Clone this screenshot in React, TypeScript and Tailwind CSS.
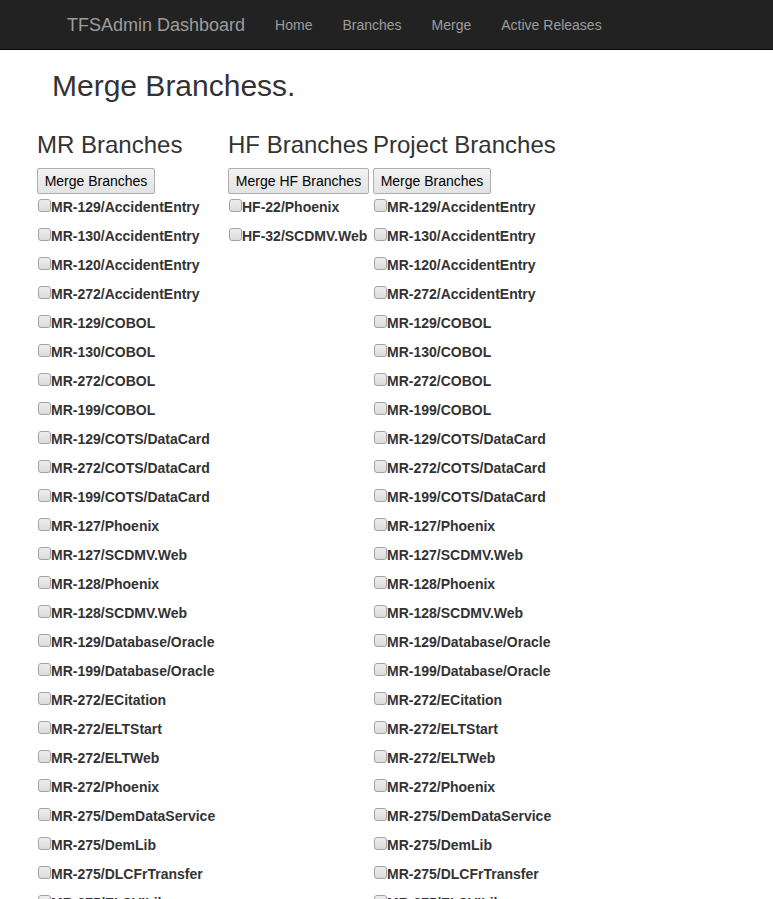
const mrBranches = [
  'MR-129/AccidentEntry',
  'MR-130/AccidentEntry',
  'MR-120/AccidentEntry',
  'MR-272/AccidentEntry',
  'MR-129/COBOL',
  'MR-130/COBOL',
  'MR-272/COBOL',
  'MR-199/COBOL',
  'MR-129/COTS/DataCard',
  'MR-272/COTS/DataCard',
  'MR-199/COTS/DataCard',
  'MR-127/Phoenix',
  'MR-127/SCDMV.Web',
  'MR-128/Phoenix',
  'MR-128/SCDMV.Web',
  'MR-129/Database/Oracle',
  'MR-199/Database/Oracle',
  'MR-272/ECitation',
  'MR-272/ELTStart',
  'MR-272/ELTWeb',
  'MR-272/Phoenix',
  'MR-275/DemDataService',
  'MR-275/DemLib',
  'MR-275/DLCFrTransfer',
  'MR-275/ELSVILib',
];

const hfBranches = ['HF-22/Phoenix', 'HF-32/SCDMV.Web'];

const navLinks = ['Home', 'Branches', 'Merge', 'Active Releases'];

function BranchRow({ name }: { name: string }) {
  return (
    <div className="flex h-[29px] items-start whitespace-nowrap">
      <input
        type="checkbox"
        className="mt-[2px] ml-[1px] h-[13px] w-[13px] shrink-0 appearance-none rounded-[3px] border border-[#a3a3a3] bg-gradient-to-b from-[#ededed] to-[#dcdcdc]"
      />
      <label className="text-[14px] leading-[20px] font-bold text-[#333]">{name}</label>
    </div>
  );
}

function BranchColumn({
  title,
  button,
  buttonWidth,
  width,
  items,
}: {
  title: string;
  button: string;
  buttonWidth: string;
  width: string;
  items: string[];
}) {
  return (
    <div className={`${width} shrink-0`}>
      <h3 className="mb-[10px] text-[24px] leading-[26.4px] font-normal whitespace-nowrap text-[#333]">{title}</h3>
      <button
        className={`${buttonWidth} mb-[3px] h-[26px] rounded-[2px] border border-[#adadad] bg-gradient-to-b from-[#f2f2f2] to-[#e3e3e3] text-center text-[14px] leading-[20px] whitespace-nowrap text-black`}
      >
        {button}
      </button>
      {items.map((b, i) => (
        <BranchRow key={i} name={b} />
      ))}
    </div>
  );
}

export default function App() {
  return (
    <div className="h-[899px] overflow-hidden bg-white font-['Liberation_Sans',Arial,sans-serif] text-[#333]">
      <nav className="flex h-[50px] items-center border-b border-[#080808] bg-[#222]">
        <span className="ml-[67px] text-[18px] leading-[20px] text-[#9d9d9d]">TFSAdmin Dashboard</span>
        <ul className="ml-[30px] flex gap-[30px] text-[14px] leading-[20px] text-[#9d9d9d]">
          {navLinks.map((l) => (
            <li key={l}>{l}</li>
          ))}
        </ul>
      </nav>

      <h2 className="pt-[19px] pl-[52px] text-[30px] leading-[33px] font-normal text-[#333]">Merge Branchess.</h2>

      <div className="mt-[30px] flex pl-[37px]">
        <BranchColumn title="MR Branches" button="Merge Branches" buttonWidth="w-[118px]" width="w-[191px]" items={mrBranches} />
        <BranchColumn title="HF Branches" button="Merge HF Branches" buttonWidth="w-[141px]" width="w-[145px]" items={hfBranches} />
        <BranchColumn title="Project Branches" button="Merge Branches" buttonWidth="w-[118px]" width="w-[200px]" items={mrBranches} />
      </div>
    </div>
  );
}
